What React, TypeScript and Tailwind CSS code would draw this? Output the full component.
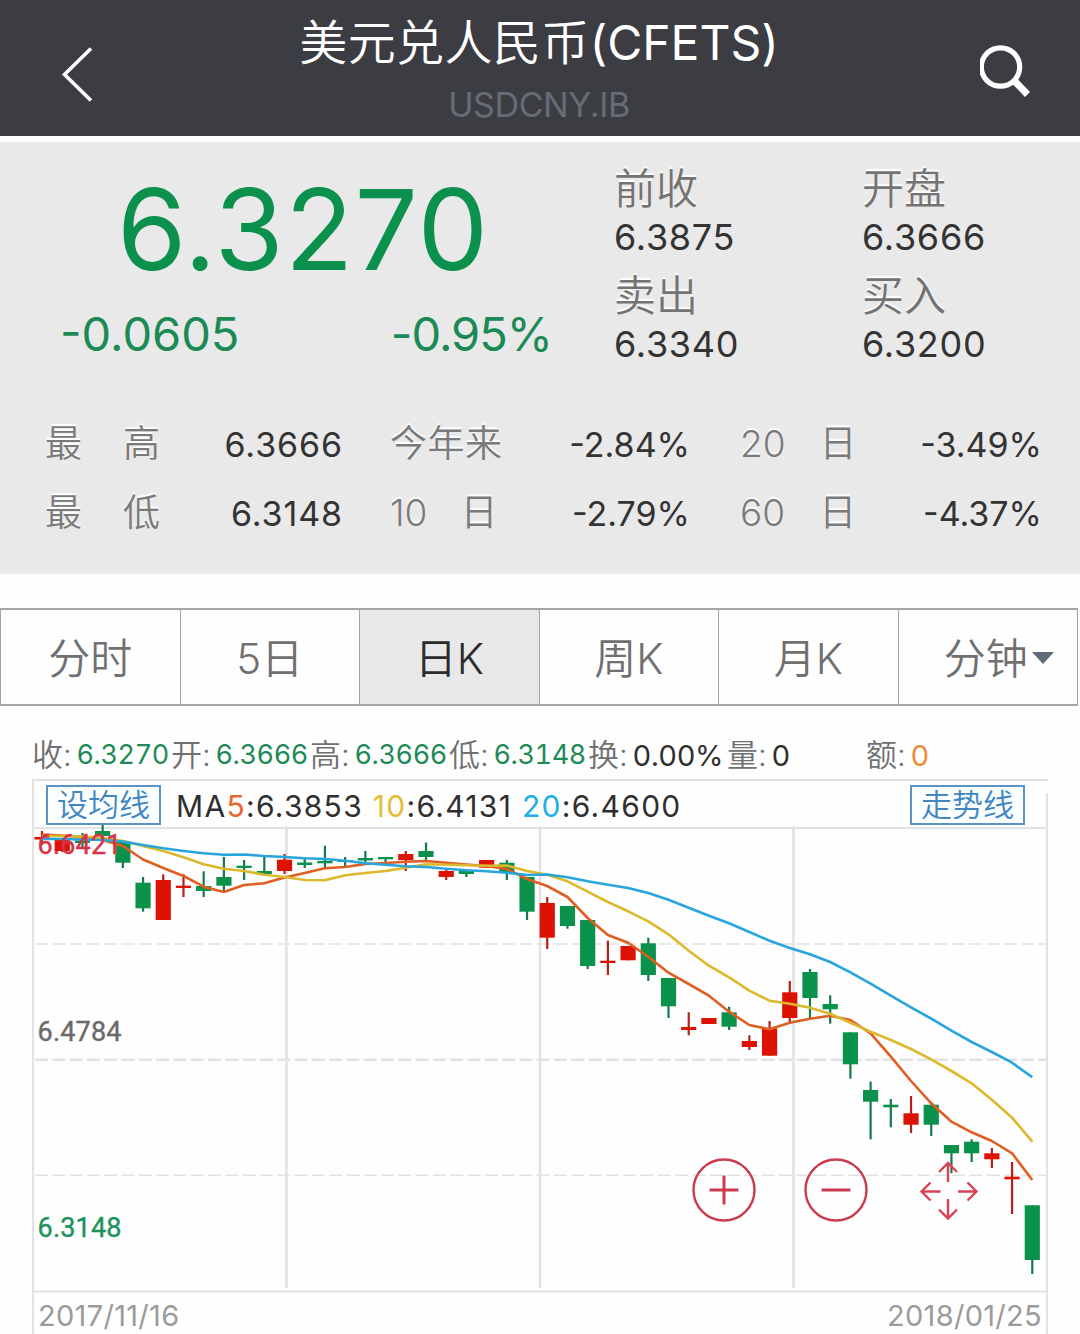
import { useState } from "react";

interface Candle {
  up: boolean;
  top: number;
  bottom: number;
  high: number;
  low: number;
}

const quotes = [
  { label: "前收", value: "6.3875" },
  { label: "开盘", value: "6.3666" },
  { label: "卖出", value: "6.3340" },
  { label: "买入", value: "6.3200" },
];

const stats = [
  { label: ["最", "高"], gap: "gap-[41px]", value: "6.3666", tracking: "tracking-[0.9px]" },
  { label: ["今", "年", "来"], gap: "-ml-[3px] gap-[0.5px]", value: "-2.84%", tracking: "" },
  { label: ["20", "日"], gap: "gap-[34px]", value: "-3.49%", tracking: "" },
  { label: ["最", "低"], gap: "gap-[41px]", value: "6.3148", tracking: "tracking-[0.9px]" },
  { label: ["10", "日"], gap: "-ml-[3px] gap-[33px]", value: "-2.79%", tracking: "" },
  { label: ["60", "日"], gap: "gap-[34px]", value: "-4.37%", tracking: "" },
];

const tabs = ["分时", "5日", "日K", "周K", "月K", "分钟"];

const summary = [
  { label: "收", value: "6.3270", style: "text-[27px] text-[#1f8a57]" },
  { label: "开", value: "6.3666", style: "text-[27px] text-[#1f8a57]" },
  { label: "高", value: "6.3666", style: "text-[27px] text-[#1f8a57]" },
  { label: "低", value: "6.3148", style: "text-[27px] text-[#1f8a57]" },
  { label: "换", value: "0.00%", style: "text-[29px] text-[#2f2f2f]" },
  { label: "量", value: "0", style: "text-[29px] text-[#2f2f2f]" },
  { label: "额", value: "0", style: "text-[29px] text-[#f08a35]" },
];

// [up, top, bottom, high, low]
const raw: [number, number, number, number, number][] = [
  [1, 837, 839.5, 831, 845],
  [1, 838.5, 851, 838, 852],
  [0, 840.5, 843, 833, 849],
  [0, 831, 836, 825, 837],
  [0, 841, 862.7, 841, 868],
  [0, 882.7, 908.3, 877, 911.7],
  [1, 880, 920, 874.3, 920],
  [1, 885.7, 888, 874.3, 897],
  [0, 886, 891, 871.3, 897],
  [0, 877, 885.7, 857, 891],
  [0, 865.7, 868, 860, 880],
  [0, 871, 874, 856, 874],
  [1, 859.7, 871, 854, 874],
  [0, 862.5, 865, 857.5, 868],
  [0, 861, 863.3, 845.7, 868],
  [0, 860, 862, 857, 866],
  [0, 858, 860.5, 851, 863],
  [0, 857, 859.3, 857, 863],
  [1, 854, 860, 851, 871],
  [0, 851, 857, 842.5, 860],
  [1, 871, 877, 868, 880],
  [0, 871, 874, 871, 877],
  [1, 860, 867.7, 860, 867.7],
  [0, 862.7, 872, 860, 880],
  [0, 877, 911.7, 877, 920],
  [1, 903, 937.7, 897, 949],
  [0, 906, 926, 906, 928.7],
  [0, 920, 966, 920, 969],
  [1, 960.7, 963, 940.7, 975],
  [1, 946, 960.3, 946, 960.3],
  [0, 943.3, 975, 937.7, 981],
  [0, 978, 1006.3, 978, 1018],
  [1, 1027, 1030, 1012.3, 1035.3],
  [1, 1018, 1024, 1018, 1024],
  [0, 1012.3, 1026.7, 1006.7, 1030],
  [1, 1041, 1047, 1035.3, 1050],
  [1, 1028.3, 1055.7, 1021, 1055.7],
  [1, 992.3, 1018, 981, 1022.7],
  [0, 972, 998, 969, 1018],
  [0, 1004, 1009.3, 995.3, 1023.7],
  [0, 1032.3, 1064.3, 1032.3, 1078.7],
  [0, 1090, 1101.7, 1081.7, 1139.3],
  [0, 1104.7, 1107.3, 1099, 1127.3],
  [1, 1113.3, 1124.7, 1096, 1133],
  [0, 1104.7, 1124.7, 1104.7, 1136],
  [0, 1145, 1153.3, 1145, 1173.3],
  [0, 1141.7, 1153.3, 1139.3, 1162],
  [1, 1153.3, 1159.3, 1148, 1168],
  [1, 1176.7, 1179.3, 1162, 1214],
  [0, 1205.3, 1260, 1205.3, 1274],
];

const candles: Candle[] = raw.map(([up, top, bottom, high, low]) => ({ up: up === 1, top, bottom, high, low }));

const ma5 = [
  834.5, 835.5, 837, 840, 846, 859.5, 868, 876, 886.7, 892, 885, 883.3, 877.5, 873, 868.3, 867, 864, 863, 861.7, 861,
  862.7, 864.5, 866, 869, 879, 886, 897, 918, 935, 942.7, 956.7, 972.7, 984, 995.7, 1011.7, 1025, 1029.3, 1022.7,
  1018.7, 1015.7, 1020, 1033.3, 1056.7, 1081, 1103.3, 1121.7, 1132.3, 1141, 1153.3, 1180,
];
const ma10 = [
  836, 836, 836.5, 838, 841, 846, 851, 857.3, 864.3, 868.7, 871, 874.7, 877, 880, 880.3, 875.3, 873, 871, 867.7, 864.3,
  864.7, 865.3, 865.7, 865.5, 871, 874.7, 881.3, 891.7, 902, 911.3, 921.3, 934.3, 950.7, 965.7, 977.3, 990.7, 1000.7,
  1003.7, 1007.7, 1013.7, 1022.7, 1031.7, 1040, 1049, 1059.3, 1071, 1083.3, 1099.7, 1117.7, 1141.7,
];
const ma20 = [
  839, 839, 839.5, 840, 841.5, 845, 848.3, 851, 853.3, 854.7, 854.5, 856, 857, 858.3, 859, 860.7, 863.3, 864.7, 866.3,
  867, 868.7, 870.3, 871.3, 872.7, 875, 874.5, 877.3, 881.3, 884.7, 888, 893, 899.7, 907.7, 915.7, 923.3, 932, 940.7,
  948, 954.3, 962, 972.3, 983.7, 995.7, 1007.3, 1018.7, 1030.7, 1042, 1052, 1062.7, 1077.3,
];

const xAt = (i: number) => 42 + i * 20.21;
const toPoints = (values: number[]) => values.map((y, i) => `${xAt(i)},${y}`).join(" ");

function KLineChart() {
  return (
    <svg className="block overflow-visible" width="1080" height="464" viewBox="0 828 1080 464">
      <g stroke="#e2e2e4" strokeWidth="2" fill="none">
        <path d="M33 779V1334M1047 793V1334M33 828H1047M33 1291.5H1047" />
        <path d="M286.5 826V1288M540 826V1288M793.5 826V1288" strokeWidth="2.5" />
        <path d="M35 944H1047M35 1175.3H1047" strokeDasharray="13 4.3" strokeWidth="1.6" />
        <path d="M35 1059.8H1047" strokeDasharray="13 4.3" strokeWidth="2.4" />
      </g>

      {candles.map((c, i) => (
        <g key={i} fill={c.up ? "#dc1203" : "#0a914b"}>
          <rect x={xAt(i) - 1.1} y={c.high} width="2.2" height={c.low - c.high} fill={c.up ? "#b5201c" : "#15794a"} />
          <rect x={xAt(i) - 7.6} y={c.top} width="15.2" height={c.bottom - c.top} />
        </g>
      ))}

      <g fill="none" strokeWidth="2.6" strokeLinejoin="round">
        <polyline points={toPoints(ma5)} stroke="#df5f22" />
        <polyline points={toPoints(ma10)} stroke="#dcb92c" />
        <polyline points={toPoints(ma20)} stroke="#27a5dc" />
      </g>

      <g fontFamily="Roboto, sans-serif" fontSize="27" strokeWidth="0.4">
        <text x="37.5" y="853.5" fill="#d8324a" stroke="#d8324a" textLength="84">6.6421</text>
        <text x="37.5" y="1041" fill="#6a6a6a" stroke="#6a6a6a" textLength="84">6.4784</text>
        <text x="37.5" y="1236.5" fill="#1f935c" stroke="#1f935c" textLength="84">6.3148</text>
      </g>
    </svg>
  );
}

export default function App() {
  const [activeTab, setActiveTab] = useState("日K");

  return (
    <div className="w-[1080px] h-[1334px] overflow-hidden bg-[#fefefe] font-[Inter,'Noto_Sans_CJK_SC',sans-serif]">
      <header className="flex h-[136px] items-start justify-between bg-[#3c3d42] pl-[62px] pr-[44px]">
        <button className="-ml-[4px] mt-[46px]">
          <svg width="40" height="58" viewBox="0 0 40 58" fill="none" stroke="#fff" strokeWidth="3.6">
            <path d="M33 2.500L6.500 28.500L33 54.500" />
          </svg>
        </button>
        <div className="flex flex-col items-center">
          <h1 className="mt-[13px] text-[48px] leading-[60px] font-[350] tracking-[0.4px] text-white">
            美元兑人民币<span className="font-normal tracking-normal">(CFETS)</span>
          </h1>
          <p className="mt-[12px] text-[34px] leading-[40px] tracking-[-0.4px] text-[#666c76]">USDCNY.IB</p>
        </div>
        <button className="mt-[42px]">
          <svg width="56" height="58" viewBox="0 0 56 58" fill="none" stroke="#fff">
            <circle cx="20.500" cy="25" r="19.200" strokeWidth="5.200" />
            <path d="M34 38.500L47.500 52.500" strokeWidth="7" />
          </svg>
        </button>
      </header>

      <section className="mt-[6px] h-[432px] bg-[#e9e9ea]">
        <div className="flex h-[266px]">
          <div className="w-[614px] text-[#0b914d]">
            <div className="pt-[27px] pl-[117px] text-[112px] leading-[120px] tracking-[1.3px]">6.3270</div>
            <div className="mt-[19px] flex justify-between pl-[60px] pr-[62px] text-[47px] leading-[52px] text-[#1b8a55]">
              <span>-0.0605</span>
              <span className="tracking-[-1px]">-0.95%</span>
            </div>
          </div>
          <div className="grid grid-cols-[248px_218px] content-start pt-[20px]">
            {quotes.map((q) => (
              <div key={q.label} className="h-[107px]">
                <div className="pt-[1px] text-[42px] leading-[51px] font-[350] text-[#747474] [text-shadow:0_-2px_1px_#fff]">
                  {q.label}
                </div>
                <div className="text-[36px] leading-[47px] tracking-[0.7px] text-[#333]">{q.value}</div>
              </div>
            ))}
          </div>
        </div>

        <div className="grid grid-cols-[298px_297px_302px] gap-x-[50px] pl-[45px] text-[#333]">
          {stats.map((s) => (
            <div key={s.label.join("") + s.value} className="flex h-[69px] items-center justify-between">
              <div
                className={`mt-[2px] flex text-[37px] font-[350] text-[#7a7a7a] [text-shadow:0_-2px_1px_#fff] ${s.gap}`}
              >
                {s.label.map((part) => (
                  <span key={part}>{part}</span>
                ))}
              </div>
              <span className={`mt-[4px] text-[34px] ${s.tracking}`}>{s.value}</span>
            </div>
          ))}
        </div>
      </section>

      <nav className="mt-[34px] flex h-[98px] w-[1078px] border-2 border-r border-l border-[#a4a4a4]">
        {tabs.map((tab) => (
          <button
            key={tab}
            onClick={() => setActiveTab(tab)}
            className={`flex flex-1 items-center justify-center border-r border-[#a4a4a4] pt-[2px] text-[42px] font-[350] last:border-r-0 ${
              activeTab === tab ? "bg-[#e8e8e8] text-[#2c2c2c]" : "text-[#707070]"
            }`}
          >
            {tab}
            {tab === "分钟" && (
              <svg className="-mr-[22px] ml-[4px]" width="22" height="14" viewBox="0 0 22 14" fill="#5e6b78">
                <path d="M0 1H22L11 13Z" />
              </svg>
            )}
          </button>
        ))}
      </nav>

      <div className="mt-[26px] mb-[2px] grid h-[45px] grid-cols-[repeat(7,139px)] items-center pl-[32px] whitespace-nowrap">
        {summary.map((item) => (
          <div key={item.label} className="flex items-center">
            <span className="w-[44.500px] text-[31px] font-[350] text-[#707070]">{item.label}:</span>
            <span className={`tabular-nums tracking-[-0.400px] ${item.style}`}>{item.value}</span>
          </div>
        ))}
      </div>

      <div className="relative">
        <div className="ml-[32px] flex h-[49px] w-[1016px] items-center border-t-2 border-[#e2e2e4] pr-[23px] pl-[14px]">
          <button className="h-[40px] w-[115px] border-2 border-[#5b93c2] bg-[#fafeff] text-[31px] leading-[36px] font-[350] text-[#4186bf]">
            设均线
          </button>
          <p className="mt-[3px] ml-[15px] text-[30px] tracking-[1.300px] whitespace-pre text-[#2f2f2f]">
            MA<span className="text-[#e8662c]">5</span>:6.3853 <span className="text-[#e3bd35]">10</span>:6.4131{" "}
            <span className="text-[#22aee6]">20</span>:6.4600
          </p>
          <button className="ml-auto h-[40px] w-[115px] border-2 border-[#5b93c2] bg-[#fafeff] text-[31px] leading-[36px] font-[350] text-[#4186bf]">
            走势线
          </button>
        </div>

        <KLineChart />

        <div className="flex h-[42px] items-center justify-between pt-[5px] pr-[38px] pl-[38px] text-[29px] tracking-[0.300px] text-[#9b9b9b]">
          <span>2017/11/16</span>
          <span>2018/01/25</span>
        </div>

        {/* Controles sobre el gráfico */}
        <div className="absolute top-[379px] left-[692px] flex gap-[48px]">
          <button>
            <svg width="64" height="64" viewBox="0 0 64 64" fill="none" stroke="#cc3a4e">
              <circle cx="32" cy="32" r="30.500" strokeWidth="2.400" />
              <path d="M17.500 32H46.500M32 17.500V46.500" strokeWidth="3" />
            </svg>
          </button>
          <button>
            <svg width="64" height="64" viewBox="0 0 64 64" fill="none" stroke="#cc3a4e">
              <circle cx="32" cy="32" r="30.500" strokeWidth="2.400" />
              <path d="M17.500 32H46.500" strokeWidth="3" />
            </svg>
          </button>
          <button>
            <svg width="64" height="64" viewBox="0 0 64 64" fill="none" stroke="#dc4055" strokeWidth="2.400">
              <path d="M32 24V5.500M23 14L32 5L41 14" />
              <path d="M32 41V60M23 51.500L32 60.500L41 51.500" />
              <path d="M24.500 33.500H5.500M14.500 24.500L5.500 33.500L14.500 42.500" />
              <path d="M42 33.500H61M51.500 24.500L60.500 33.500L51.500 42.500" />
            </svg>
          </button>
        </div>
      </div>
    </div>
  );
}
